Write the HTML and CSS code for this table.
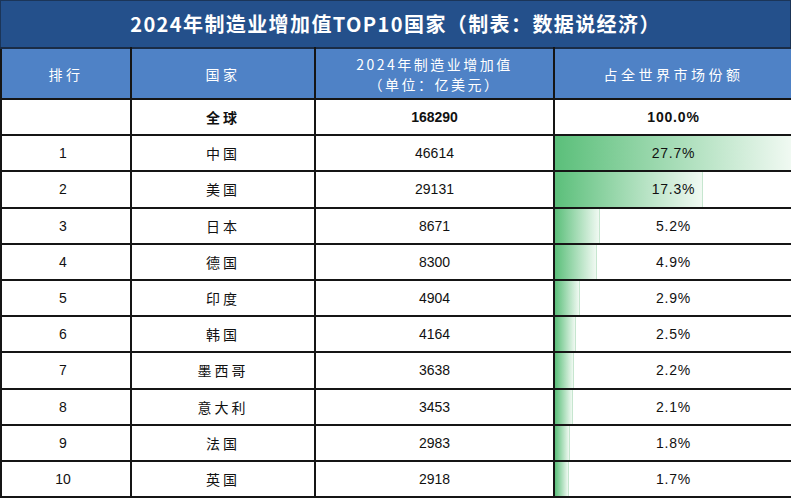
FILE: index.html
```html
<!DOCTYPE html>
<html lang="zh">
<head>
<meta charset="utf-8">
<link rel="stylesheet" href="styles.css">
</head>
<body>
<div class="page">
  <div class="title">2024年制造业增加值TOP10国家（制表：数据说经济）</div>
  <table class="grid">
    <colgroup>
      <col class="c1"><col class="c2"><col class="c3"><col class="c4">
    </colgroup>
    <thead>
      <tr class="head">
        <th>排行</th>
        <th>国家</th>
        <th class="two">2024年制造业增加值<br>（单位：亿美元）</th>
        <th>占全世界市场份额</th>
      </tr>
    </thead>
    <tbody>
      <tr class="total">
        <td></td>
        <td class="cn">全球</td>
        <td class="num">168290</td>
        <td class="pct">100.0%</td>
      </tr>
      <tr><td class="num rank">1</td><td class="cn">中国</td><td class="num">46614</td><td class="pct"><span class="bar" style="width:100%"></span><span class="val">27.7%</span></td></tr>
      <tr><td class="num rank">2</td><td class="cn">美国</td><td class="num">29131</td><td class="pct"><span class="bar" style="width:62.5%"></span><span class="val">17.3%</span></td></tr>
      <tr><td class="num rank">3</td><td class="cn">日本</td><td class="num">8671</td><td class="pct"><span class="bar" style="width:18.8%"></span><span class="val">5.2%</span></td></tr>
      <tr><td class="num rank">4</td><td class="cn">德国</td><td class="num">8300</td><td class="pct"><span class="bar" style="width:17.7%"></span><span class="val">4.9%</span></td></tr>
      <tr><td class="num rank">5</td><td class="cn">印度</td><td class="num">4904</td><td class="pct"><span class="bar" style="width:10.5%"></span><span class="val">2.9%</span></td></tr>
      <tr><td class="num rank">6</td><td class="cn">韩国</td><td class="num">4164</td><td class="pct"><span class="bar" style="width:9%"></span><span class="val">2.5%</span></td></tr>
      <tr><td class="num rank">7</td><td class="cn">墨西哥</td><td class="num">3638</td><td class="pct"><span class="bar" style="width:7.9%"></span><span class="val">2.2%</span></td></tr>
      <tr><td class="num rank">8</td><td class="cn">意大利</td><td class="num">3453</td><td class="pct"><span class="bar" style="width:7.6%"></span><span class="val">2.1%</span></td></tr>
      <tr><td class="num rank">9</td><td class="cn">法国</td><td class="num">2983</td><td class="pct"><span class="bar" style="width:6.5%"></span><span class="val">1.8%</span></td></tr>
      <tr><td class="num rank">10</td><td class="cn">英国</td><td class="num">2918</td><td class="pct"><span class="bar" style="width:6.1%"></span><span class="val">1.7%</span></td></tr>
    </tbody>
  </table>
</div>
</body>
</html>
```
FILE: styles.css
```css
html, body {
  margin: 0;
  padding: 0;
  background: #ffffff;
}
.page {
  width: 791px;
  overflow: hidden;
  font-family: "Liberation Sans", "Noto Sans CJK SC", sans-serif;
}
.title {
  height: 47px;
  box-sizing: border-box;
  background: #24508b;
  border: 1px solid #1b3558;
  border-bottom: none;
  color: #ffffff;
  font-family: "Noto Sans CJK SC", sans-serif;
  font-weight: 700;
  font-size: 20px;
  letter-spacing: 1.4px;
  line-height: 46px;
  text-align: center;
}
.grid {
  width: 792px;
  table-layout: fixed;
  border-collapse: collapse;
}
.c1 { width: 130px; }
.c2 { width: 184px; }
.c3 { width: 239px; }
.c4 { width: 239px; }
.grid th, .grid td {
  border: 2px solid #151515;
  padding: 0;
  text-align: center;
  vertical-align: middle;
}
.head th {
  height: 48px;
  background: #4f82c6;
  color: #ffffff;
  font-family: "Noto Sans CJK SC", sans-serif;
  font-weight: 400;
  font-size: 14px;
  letter-spacing: 3.5px;
  border-top-color: #1a2c46;
}
.head th.two {
  line-height: 20px;
  letter-spacing: 2.5px;
  padding-top: 1px;
}
.grid td {
  height: 34.2px;
  font-size: 14px;
  color: #111111;
}
.cn {
  font-family: "Noto Sans CJK SC", sans-serif;
  font-size: 13px;
  letter-spacing: 3px;
}
.num {
  font-family: "Liberation Sans", sans-serif;
}
.grid td.rank {
  padding-right: 6px;
}
.pct {
  position: relative;
  font-family: "Liberation Sans", sans-serif;
  letter-spacing: 0.8px;
}
.total td {
  font-weight: 700;
}
.bar {
  position: absolute;
  left: 0;
  top: 0;
  bottom: 0;
  box-sizing: border-box;
  background: linear-gradient(to right, #5bbf7a, #f0f9f2);
  border-right: 1px solid #c6e6cf;
}
.val {
  position: relative;
}
```
